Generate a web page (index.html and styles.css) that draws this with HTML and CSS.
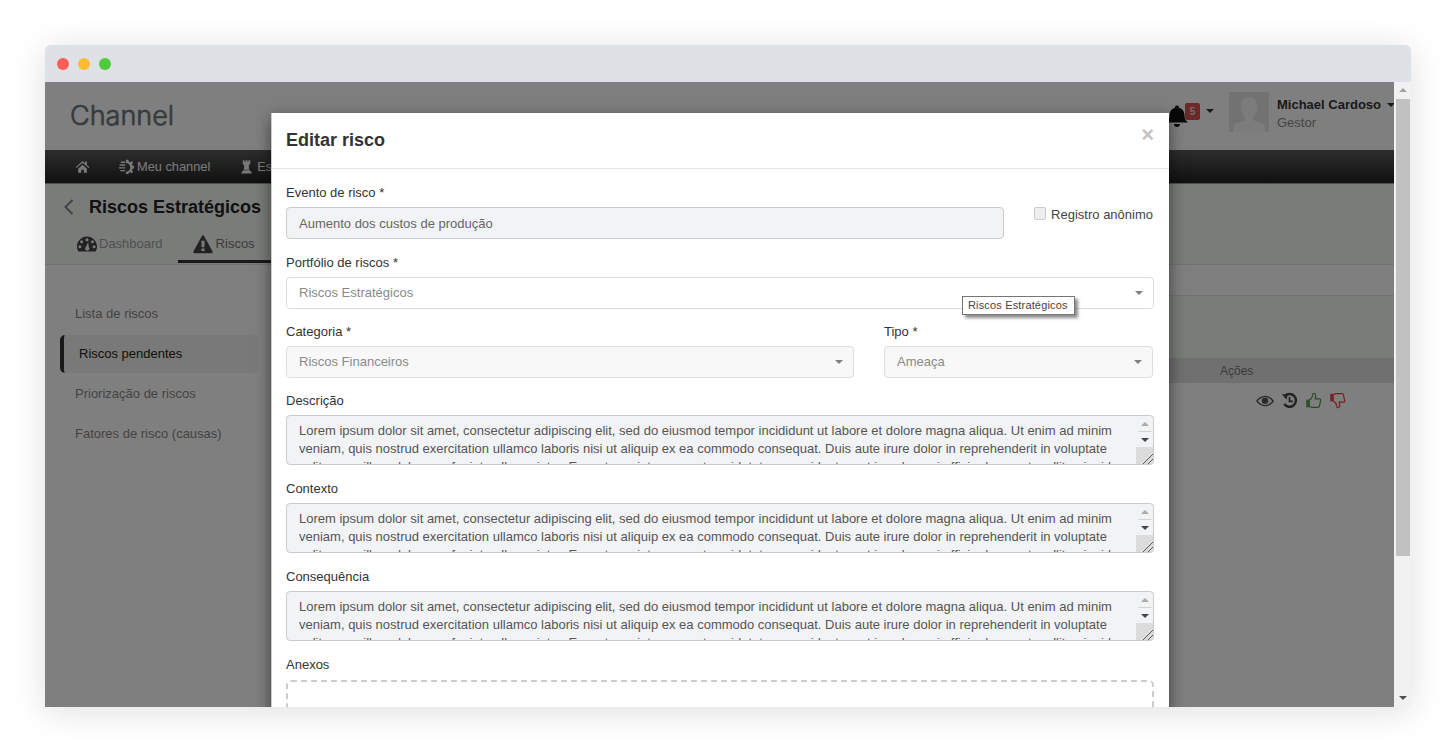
FILE: index.html
```html
<!DOCTYPE html>
<html lang="pt">
<head>
<meta charset="utf-8">
<title>Editar risco</title>
<link rel="stylesheet" href="styles.css">
</head>
<body>
<div class="window">
  <div class="titlebar">
    <span class="dot dot-red"></span><span class="dot dot-yellow"></span><span class="dot dot-green"></span>
  </div>
  <div class="viewport">
    <div class="page">
      <header class="topbar">
        <div class="logo">Channel</div>
        <div class="topbar-right">
          <svg class="bell" viewBox="0 0 24 24"><path d="M12 1.500a2 2 0 0 1 2 2.200c4 1 5.500 4.300 5.500 8.300 0 3.500 1.500 5 3.500 6.500H1c2-1.500 3.500-3 3.500-6.500 0-4 1.500-7.300 5.500-8.300a2 2 0 0 1 2-2.200zM9 20h6a3 3 0 0 1-6 0z"/></svg>
          <span class="badge">5</span>
          <span class="caret caret-dark bell-caret"></span>
          <svg class="avatar" viewBox="0 0 40 40"><rect width="40" height="40" fill="#e4e4e4"/><path d="M20 5c5 0 8.500 4 8.500 10 0 4-2 8-4.500 10v3c3 2 10 2.500 12 6v6H4v-6c2-3.500 9-4 12-6v-3c-2.500-2-4.500-6-4.500-10C11.500 9 15 5 20 5z" fill="#f8f8f8"/></svg>
          <div class="user">
            <div class="user-name">Michael Cardoso <span class="caret caret-dark"></span></div>
            <div class="user-role">Gestor</div>
          </div>
        </div>
      </header>
      <nav class="mainnav">
        <span class="nav-item"><svg class="nav-icon" viewBox="0 0 24 24"><path d="M12 3 1 13l1.300 1.500L12 6l9.700 8.500L23 13l-4-3.600V4h-3v2.700zM5 15.500V22h5v-5h4v5h5v-6.500L12 9.300z"/></svg></span>
        <span class="nav-item"><svg class="nav-icon" viewBox="0 0 24 24"><path d="M11 1h4l.6 3 2.600 1 2.300-1.700 2 2.500-1.800 2.300.8 2.400L24 11v4l-2.500.5-.8 2.400 1.800 2.300-2 2.500-2.300-1.700-2.600 1-.6 2.900h-4v-4.500a7 7 0 0 0 0-14z"/><path d="M3 4h7v2.200H3zM1 8.500h9v2.200H1zM0 13h10v2.200H0zM2 17.500h8v2.200H2z"/></svg>Meu channel</span>
        <span class="nav-item"><svg class="nav-icon" viewBox="0 0 24 24"><path d="M6 2h3v2.500h1.500V2h3v2.500H15V2h3v6l-2.500 2 .8 7H7.700l.8-7L6 8zM6.500 18h11l1 2.500H20V23H4v-2.500h1.500z"/></svg>Estratégia</span>
      </nav>
      <div class="pagehead">
        <div class="pagetitle">
          <svg class="back" viewBox="0 0 12 18"><path d="M10 2 3 9l7 7" fill="none" stroke="currentColor" stroke-width="2"/></svg>
          <h1>Riscos Estratégicos</h1>
        </div>
        <div class="tabs">
          <span class="tab"><svg class="tab-icon" viewBox="0 0 24 24"><path fill-rule="evenodd" d="M12 3C5.400 3 0 8.400 0 15c0 2.200.6 4.200 1.600 6h20.800c1-1.800 1.600-3.800 1.600-6 0-6.600-5.400-12-12-12zM12 5a1.800 1.800 0 1 1 0 3.600A1.800 1.800 0 0 1 12 5zM5.500 7.500a1.800 1.800 0 1 1 0 3.600 1.800 1.800 0 0 1 0-3.600zM18.500 7.500a1.800 1.800 0 1 1 0 3.600 1.800 1.800 0 0 1 0-3.600zM3.500 13.500a1.800 1.800 0 1 1 0 3.600 1.800 1.800 0 0 1 0-3.600zM20.500 13.500a1.800 1.800 0 1 1 0 3.600 1.800 1.800 0 0 1 0-3.600zM13.500 9.500l.6 6a2.600 2.600 0 1 1-3.500 0z"/></svg>Dashboard</span>
          <span class="tab tab-active"><svg class="tab-icon" viewBox="0 0 24 24"><path fill-rule="evenodd" d="M12 1.500a1.500 1.500 0 0 1 1.300.8l10.400 18.900A1.500 1.500 0 0 1 22.400 23H1.600a1.500 1.500 0 0 1-1.300-1.800L10.700 2.300A1.500 1.500 0 0 1 12 1.500zM10 8l.4 8h3.200l.4-8zM10.200 17.500v3h3.600v-3z"/></svg>Riscos</span>
        </div>
      </div>
      <div class="main">
        <aside class="sidebar">
          <div class="side-item">Lista de riscos</div>
          <div class="side-item side-active">Riscos pendentes</div>
          <div class="side-item">Priorização de riscos</div>
          <div class="side-item">Fatores de risco (causas)</div>
        </aside>
        <section class="content">
          <div class="toolbar"></div>
          <div class="filters"></div>
          <div class="table-head"><span>Ações</span></div>
          <div class="table-row">
            <svg class="act act-eye" viewBox="0 0 24 16"><path fill-rule="evenodd" d="M12 1c5 0 9.500 3 12 7-2.500 4-7 7-12 7S2.500 12 0 8c2.500-4 7-7 12-7zM2.400 8c2.300 3 5.700 5.300 9.600 5.300S19.300 11 21.600 8C19.300 5 15.900 2.700 12 2.700S4.700 5 2.400 8z"/><circle cx="12" cy="7.500" r="4.300"/></svg>
            <svg class="act act-hist" viewBox="0 0 20 20"><path d="M4.600 4.800A7.500 7.500 0 1 1 3.800 14" fill="none" stroke="currentColor" stroke-width="2.800"/><path d="M1 2.500 8 2.500 6.500 9z"/><path d="M10 6v5h4" fill="none" stroke="currentColor" stroke-width="2"/></svg>
            <svg class="act act-up" viewBox="0 0 20 20"><path d="M1.500 9h3v9h-3z" fill="#4a9a4a"/><path d="M5 9.500c2-1 3.500-3 4-5.500 0-1.500.5-2.500 1.500-2.500 1.500 0 2.500 1.500 2 4L12 8h5c1 0 1.500.8 1.500 1.500l-1.500 7c-.2 1-1 1.500-2 1.500H8c-1.500 0-2-1-3-1z" fill="none" stroke="#4a9a4a" stroke-width="1.400"/></svg>
            <svg class="act act-down" viewBox="0 0 20 20"><path d="M1.500 2h3v9h-3z" fill="#e8403c"/><path d="M5 10.500c2 1 3.500 3 4 5.500 0 1.500.5 2.500 1.500 2.500 1.500 0 2.500-1.500 2-4L12 12h5c1 0 1.500-.8 1.500-1.500l-1.500-7c-.2-1-1-1.500-2-1.500H8c-1.500 0-2 1-3 1z" fill="none" stroke="#e8403c" stroke-width="1.400"/></svg>
          </div>
        </section>
      </div>

      <div class="backdrop"></div>

      <div class="modal">
        <div class="modal-header">
          <h2>Editar risco</h2>
          <span class="close">×</span>
        </div>
        <div class="modal-body">
          <div class="row row-first">
            <div class="field field-event">
              <label class="label">Evento de risco *</label>
              <div class="control control-readonly">Aumento dos custos de produção</div>
            </div>
            <div class="anon"><span class="checkbox"></span><span>Registro anônimo</span></div>
          </div>
          <div class="field field-tight">
            <label class="label">Portfólio de riscos *</label>
            <div class="control select">Riscos Estratégicos<span class="caret caret-grey"></span></div>
          </div>
          <div class="row">
            <div class="field field-tight field-cat">
              <label class="label">Categoria *</label>
              <div class="control select select-disabled">Riscos Financeiros<span class="caret caret-grey"></span></div>
            </div>
            <div class="field field-tight field-type">
              <label class="label">Tipo *</label>
              <div class="control select select-disabled">Ameaça<span class="caret caret-grey"></span></div>
            </div>
          </div>
          <div class="field">
            <label class="label">Descrição</label>
            <div class="area">
              <div class="area-text">Lorem ipsum dolor sit amet, consectetur adipiscing elit, sed do eiusmod tempor incididunt ut labore et dolore magna aliqua. Ut enim ad minim veniam, quis nostrud exercitation ullamco laboris nisi ut aliquip ex ea commodo consequat. Duis aute irure dolor in reprehenderit in voluptate velit esse cillum dolore eu fugiat nulla pariatur. Excepteur sint occaecat cupidatat non proident, sunt in culpa qui officia deserunt mollit anim id est laborum.</div>
              <div class="area-bar"><span class="arr arr-up"></span><span class="arr-sep"></span><span class="arr arr-down"></span><span class="grip"></span></div>
            </div>
          </div>
          <div class="field">
            <label class="label">Contexto</label>
            <div class="area">
              <div class="area-text">Lorem ipsum dolor sit amet, consectetur adipiscing elit, sed do eiusmod tempor incididunt ut labore et dolore magna aliqua. Ut enim ad minim veniam, quis nostrud exercitation ullamco laboris nisi ut aliquip ex ea commodo consequat. Duis aute irure dolor in reprehenderit in voluptate velit esse cillum dolore eu fugiat nulla pariatur. Excepteur sint occaecat cupidatat non proident, sunt in culpa qui officia deserunt mollit anim id est laborum.</div>
              <div class="area-bar"><span class="arr arr-up"></span><span class="arr-sep"></span><span class="arr arr-down"></span><span class="grip"></span></div>
            </div>
          </div>
          <div class="field">
            <label class="label">Consequência</label>
            <div class="area">
              <div class="area-text">Lorem ipsum dolor sit amet, consectetur adipiscing elit, sed do eiusmod tempor incididunt ut labore et dolore magna aliqua. Ut enim ad minim veniam, quis nostrud exercitation ullamco laboris nisi ut aliquip ex ea commodo consequat. Duis aute irure dolor in reprehenderit in voluptate velit esse cillum dolore eu fugiat nulla pariatur. Excepteur sint occaecat cupidatat non proident, sunt in culpa qui officia deserunt mollit anim id est laborum.</div>
              <div class="area-bar"><span class="arr arr-up"></span><span class="arr-sep"></span><span class="arr arr-down"></span><span class="grip"></span></div>
            </div>
          </div>
          <div class="field">
            <label class="label label-attach">Anexos</label>
            <div class="dropzone"></div>
          </div>
        </div>
      </div>
      <div class="tooltip">Riscos Estratégicos</div>
    </div>
    <div class="scrollbar">
      <span class="sb-arrow sb-up"></span>
      <span class="sb-thumb"></span>
      <span class="sb-arrow sb-down"></span>
    </div>
  </div>
</div>
</body>
</html>
```

FILE: styles.css
```css
* { box-sizing: border-box; }
html, body { margin: 0; height: 100%; }
body {
  background: #fff;
  padding: 45px;
  font-family: "Liberation Sans", Arial, sans-serif;
  font-size: 13px;
  overflow: hidden;
}
.window {
  height: 662px;
  display: flex;
  flex-direction: column;
  border-radius: 6px 6px 0 0;
  background: #fff;
  box-shadow: 0 4px 34px rgba(0,0,0,.13);
}
.titlebar {
  height: 37px;
  flex: none;
  display: flex;
  align-items: center;
  gap: 9px;
  padding: 0 0 0 12px;
  background: #dee1e6;
  border-radius: 6px 6px 0 0;
}
.dot { width: 12px; height: 12px; border-radius: 50%; }
.dot-red { background: #fc5d57; }
.dot-yellow { background: #fdbc2e; }
.dot-green { background: #4fc93f; }

.viewport { flex: 1; display: flex; min-height: 0; }
.page { flex: 1; position: relative; overflow: hidden; background: #fff; color: #333; }

.scrollbar {
  width: 17px;
  flex: none;
  background: #f1f1f1;
  display: flex;
  flex-direction: column;
  align-items: center;
}
.sb-arrow { width: 0; height: 0; border-left: 4px solid transparent; border-right: 4px solid transparent; flex: none; }
.sb-up { margin: 6px 0 7px; border-bottom: 4px solid #a3a3a3; }
.sb-thumb { width: 14px; height: 457px; background: #c1c1c1; flex: none; margin-left: 1px; }
.sb-down { margin-top: auto; margin-bottom: 7px; border-top: 4px solid #505050; }

.topbar { height: 68px; position: relative; display: flex; justify-content: space-between; }
.logo {
  font-family: "Inter", sans-serif;
  font-size: 27px;
  font-weight: 300;
  color: #6c777e;
  padding: 17px 0 0 25px;
  -webkit-text-stroke: .7px #6c777e;
}
.topbar-right { display: flex; align-items: flex-start; padding-top: 10px; white-space: nowrap; width: 230px; flex: none; margin-right: -1px; }
.bell { width: 24px; height: 24px; margin: 12px 0 0 0; fill: #111; flex: none; }
.badge {
  width: 15px; height: 17px; margin: 11px 0 0 -4px; background: #d9534f;
  border-radius: 2px; color: #ddd; font-size: 10px; font-weight: bold; text-align: center; line-height: 17px; flex: none;
}
.caret { display: inline-block; width: 0; height: 0; border-left: 4px solid transparent; border-right: 4px solid transparent; }
.caret-dark { border-top: 4px solid #333; vertical-align: 2px; margin-left: 2px; }
.bell-caret { margin: 17px 15px 0 6px; flex: none; }
.avatar { width: 40px; height: 40px; flex: none; }
.user { padding: 3px 0 0 8px; }
.user-name { font-weight: bold; color: #333; font-size: 13px; line-height: 20px; }
.user-role { color: #888; font-size: 13px; line-height: 16px; }

.mainnav {
  height: 34px;
  background: linear-gradient(#5a5a5a, #222);
  border-bottom: 1px solid #9a9a9a;
  display: flex;
  align-items: center;
  padding-left: 30px;
  gap: 29px;
  color: #f5f5f5;
  white-space: nowrap;
}
.nav-item { display: inline-flex; align-items: center; gap: 3px; font-size: 12.800px; }
.nav-icon { width: 15px; height: 15px; fill: #f0f0f0; flex: none; }

.pagehead { height: 81px; background: #f5f8f5; border-bottom: 1px solid #e4e4e4; padding: 11px 0 0 17px; }
.pagetitle { display: flex; align-items: center; height: 24px; }
.back { width: 13px; height: 18px; color: #7b868d; margin-right: 14px; flex: none; }
h1 { margin: 0; font-size: 18px; font-weight: bold; color: #222; white-space: nowrap; }
.tabs { display: flex; margin: 11px 0 0 0; }
.tab {
  display: inline-flex; align-items: center; height: 33px; padding: 0 14px 3px; color: #a0a0a0; gap: 1px; border-bottom: 3px solid transparent; white-space: nowrap; font-size: 13px;
}
.tab-active { color: #777; border-bottom-color: #333; margin-left: 1px; padding-right: 16px; gap: 2px; }
.tab-icon { width: 22px; height: 20px; fill: #444; flex: none; }

.main { display: flex; background: #fff; }
.sidebar { width: 226px; padding: 29px 0 0 15px; flex: none; }
.side-item { height: 40px; line-height: 40px; padding-left: 15px; color: #888; width: 198px; }
.side-active {
  height: 38px; line-height: 38px; margin: 1px 0; background: #f1f2f1; color: #222;
  border-left: 4px solid #333; border-radius: 5px; padding-left: 15px;
}
.content { flex: 1; }
.toolbar { height: 31px; border-bottom: 1px solid #e4e4e4; }
.filters { height: 62px; background: #f5f8f5; }
.table-head { height: 25px; background: #e0e0e0; color: #777; padding-left: 949px; line-height: 26px; font-size: 12px; }
.table-row { display: flex; align-items: center; gap: 7px; padding: 9px 0 0 985px; }
.act { flex: none; fill: currentColor; }
.act-eye { width: 18px; height: 12px; color: #555; }
.act-hist { width: 17px; height: 17px; color: #444; fill: #444; }
.act-up { width: 17px; height: 17px; }
.act-down { width: 17px; height: 17px; }

.backdrop { position: absolute; inset: 0; background: rgba(0,0,0,.5); }

.modal {
  position: absolute;
  left: 226px;
  top: 31px;
  width: 898px;
  background: #fff;
  border-left: 1px solid rgba(0,0,0,.2);
  box-shadow: 0 5px 15px rgba(0,0,0,.5);
  color: #333;
}
.modal-header { height: 56px; border-bottom: 1px solid #e5e5e5; display: flex; align-items: center; justify-content: space-between; padding: 0 15px 0 14px; }
h2 { margin: 0; font-size: 18px; font-weight: bold; color: #333; }
.close { color: #c4c4c4; font-size: 22px; font-weight: bold; line-height: 1; margin: -12px 0 0 0; }
.modal-body { padding: 15px 15px 20px 14px; font-size: 13px; }
.row { display: flex; }
.row-first { justify-content: space-between; }
.field { margin-bottom: 15px; }
.field-tight { margin-bottom: 14px; }
.field-event { width: 718px; }
.field-cat { width: 568px; margin-right: 30px; }
.field-type { width: 269px; }
.label { display: block; font-size: 13px; line-height: 17px; margin-bottom: 6px; color: #333; }
.label-attach { margin-bottom: 7px; }
.anon { display: flex; align-items: center; gap: 5px; padding-top: 23px; align-self: flex-start; color: #444; font-size: 13px; margin-right: 1px; white-space: nowrap; }
.checkbox { width: 12px; height: 13px; background: #eee; border: 1px solid #ccc; border-radius: 2px; margin-top: -3px; }
.control {
  height: 32px; line-height: 30px; border: 1px solid #ddd; border-radius: 4px; padding: 0 12px; color: #666; font-size: 13px; position: relative;
}
.control-readonly { background: #f2f3f5; border-color: #ccc; line-height: 31px; }
.select { color: #8a8a8a; }
.select-disabled { background: #f8f8f8; }
.caret-grey { position: absolute; right: 10px; top: 13px; border-top: 4px solid #808080; }

.area { height: 50px; border: 1px solid #ccc; border-radius: 4px; background: #f2f3f5; display: flex; overflow: hidden; }
.area-text { flex: 1; padding: 6px 12px; line-height: 18px; color: #555; font-size: 13px; overflow: hidden; }
.area-bar { width: 17px; flex: none; display: flex; flex-direction: column; align-items: center; }
.arr { width: 0; height: 0; flex: none; border-left: 4px solid transparent; border-right: 4px solid transparent; }
.arr-up { margin-top: 6px; border-bottom: 4px solid #aaa; }
.arr-sep { width: 14px; height: 1px; margin-top: 5px; background: #d5d5d5; flex: none; }
.arr-down { margin-top: 6px; border-top: 4px solid #444; }
.grip {
  margin-top: auto; width: 17px; height: 17px; flex: none;
  background: linear-gradient(135deg, #dcdcdc 0 69%, #555 69% 72%, #dcdcdc 72% 83%, #555 83% 86%, #dcdcdc 86%);
}
.dropzone { height: 80px; border: 2px dashed #ccc; border-radius: 5px; }

.tooltip {
  position: absolute; left: 917px; top: 214px; height: 19px; line-height: 17px; padding: 0 6px 0 5px;
  background: #fff; border: 1px solid #767676; color: #444; font-size: 11px; letter-spacing: .16px; white-space: nowrap;
  box-shadow: 3px 3px 3px rgba(0,0,0,.45);
}
```
